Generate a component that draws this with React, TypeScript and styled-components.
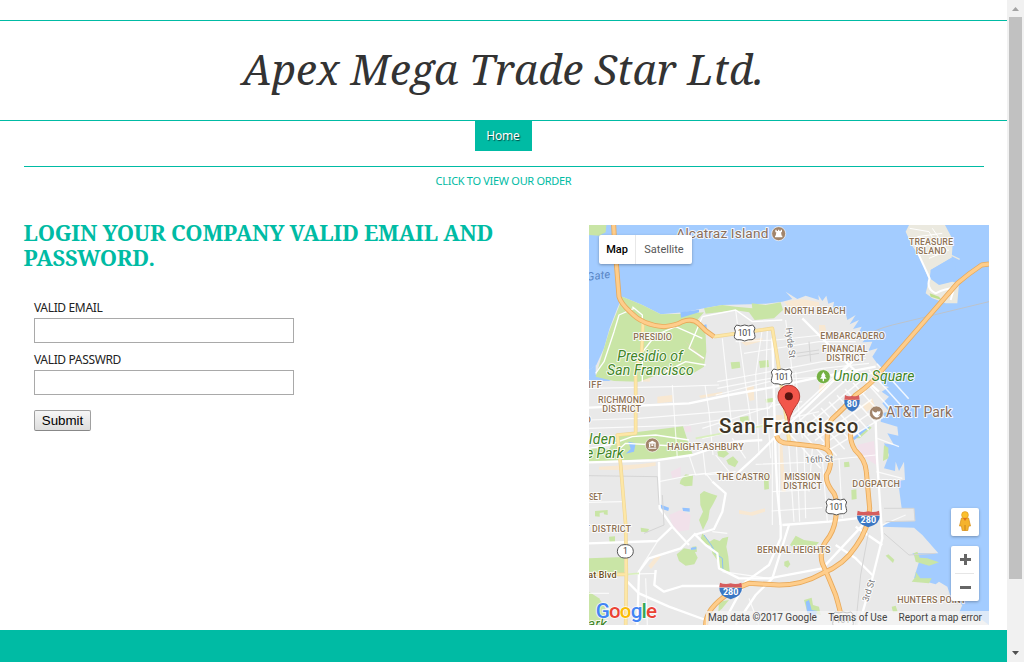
import React from "react";
import styled, { createGlobalStyle } from "styled-components";

const TEAL = "#00bba4";

const GlobalStyle = createGlobalStyle`
  * { box-sizing: border-box; }
  body { margin: 0; background: #fff; overflow: hidden; }
`;

const Window = styled.div`
  display: flex;
  width: 1024px;
  height: 662px;
  overflow: hidden;
  font-family: "Noto Sans", "Open Sans", sans-serif;
`;

const Page = styled.div`
  width: 1007px;
  height: 662px;
  padding-top: 20px;
  display: flex;
  flex-direction: column;
`;

const Header = styled.header`
  height: 101px;
  flex: none;
  border-top: 1px solid ${TEAL};
  border-bottom: 1px solid ${TEAL};
  display: flex;
  align-items: center;
  justify-content: center;
`;

const Title = styled.h1`
  margin: 0 1px 4px 0;
  font: italic 400 42px/50px "Noto Serif", "DejaVu Serif Condensed", serif;
  color: #333;
  white-space: nowrap;
`;

const Nav = styled.nav`
  height: 46px;
  flex: none;
  margin: 0 23px 0 24px;
  padding-right: 2px;
  border-bottom: 1px solid ${TEAL};
  display: flex;
  justify-content: center;
  align-items: flex-start;
`;

const NavLink = styled.a`
  width: 57px;
  height: 30px;
  background: ${TEAL};
  color: #fff;
  font-size: 12px;
  line-height: 30px;
  letter-spacing: -0.2px;
  text-align: center;
  text-shadow: 1px 1px 1px rgba(0, 0, 0, 0.6);
`;

const OrderLink = styled.a`
  height: 58px;
  flex: none;
  padding-top: 6px;
  text-align: center;
  color: ${TEAL};
  font-size: 11px;
  line-height: 16px;
  letter-spacing: -0.3px;
`;

const Main = styled.main`
  flex: none;
  height: 405px;
  display: flex;
  justify-content: space-between;
  padding: 0 18px 0 24px;
`;

const LoginColumn = styled.section`
  width: 500px;
`;

const Heading = styled.h2`
  margin: -5px 0 28px -0.5px;
  font: 700 22px/25px "Noto Serif", "DejaVu Serif Condensed", serif;
  letter-spacing: -0.26px;
  color: ${TEAL};
`;

const Form = styled.form`
  padding-left: 10px;
  display: flex;
  flex-direction: column;
  align-items: flex-start;
`;

const Field = styled.label`
  display: flex;
  flex-direction: column;
  height: 52px;
  font-size: 12px;
  line-height: 20px;
  letter-spacing: -0.35px;
  color: #222;
`;

const Input = styled.input`
  width: 260px;
  height: 25px;
  border: 1px solid #a9a9a9;
  border-radius: 0;
  padding: 0;
  background: #fff;
  outline: none;
`;

const Submit = styled.button`
  margin-top: 8px;
  width: 57px;
  height: 21px;
  padding: 0;
  border: 1px solid #a0a0a0;
  border-bottom-color: #888;
  border-radius: 2px;
  background: linear-gradient(#f6f6f6, #dddddd);
  font: 13.33px/18px "Liberation Sans", Arial, sans-serif;
  color: #000;
`;

const Footer = styled.footer`
  flex: 1;
  background: ${TEAL};
`;

const ScrollTrack = styled.div`
  width: 17px;
  height: 662px;
  background: #f1f1f1;
  display: flex;
  flex-direction: column;
  align-items: center;
`;

const ScrollArrow = styled.svg`
  width: 17px;
  height: 17px;
  flex: none;
`;

const ScrollThumb = styled.div`
  width: 13px;
  height: 562px;
  background: #c1c1c1;
  margin-bottom: auto;
`;

const MapFrame = styled.section`
  position: relative;
  width: 400px;
  height: 400px;
  overflow: hidden;
  font-family: Roboto, sans-serif;
`;

const MapDrawing = styled.svg`
  display: block;
  width: 400px;
  height: 400px;
  font-family: Roboto, sans-serif;
`;

const MapTypes = styled.div`
  position: absolute;
  left: 10px;
  top: 10px;
  display: flex;
  height: 29px;
  border-radius: 2px;
  background: #fff;
  box-shadow: 0 1px 3px rgba(0, 0, 0, 0.3);
`;

const MapType = styled.div<{ $active?: boolean; $width: number }>`
  width: ${(p) => p.$width}px;
  text-align: center;
  font-size: 11px;
  line-height: 29px;
  color: ${(p) => (p.$active ? "#000" : "#565656")};
  font-weight: ${(p) => (p.$active ? 500 : 400)};
  & + & { border-left: 1px solid #e8e8e8; }
`;

const MapTools = styled.div`
  position: absolute;
  right: 10px;
  bottom: 24px;
  display: flex;
  flex-direction: column;
  gap: 10px;
`;

const Tool = styled.div`
  width: 28px;
  border-radius: 2px;
  background: #fff;
  box-shadow: 0 1px 3px rgba(0, 0, 0, 0.3);
  svg { display: block; }
`;

const Attribution = styled.div`
  position: absolute;
  right: 0;
  bottom: 0;
  height: 14px;
  width: 283px;
  padding: 0 7px 0 2px;
  display: flex;
  justify-content: space-between;
  background: rgba(245, 245, 245, 0.7);
  color: #444;
  font-size: 10px;
  line-height: 14px;
  white-space: nowrap;
`;

const PARKS = [
  "0,0 52,0 50,22 30,32 0,30",
  "100,215 160,240 215,268 285,266 345,262 325,285 350,330 352,380 345,425 300,452 230,440 150,470 75,468 20,455 36,400 60,320 88,250",
  "345,250 400,240 440,245 490,250 488,235 530,240 575,232 582,255 555,280 497,285 480,262 440,256 350,266",
  "92,628 282,604 300,660 312,690 230,700 0,710 0,670 60,672",
  "425,412 452,410 454,428 428,432", "510,408 538,405 540,426 513,429",
  "452,577 478,573 480,590 455,593", "530,522 555,518 556,530 531,533",
  "385,680 405,672 420,686 404,698 388,694", "412,706 432,694 448,710 438,727 418,718",
  "275,765 290,748 312,752 310,782 288,784 272,776",
  "333,808 345,798 362,805 385,812 372,838 362,855 358,882 342,915 330,885 342,860 334,840",
  "340,925 362,950 375,942 392,948 400,940 418,935 412,965 418,995 422,1040 392,1035 388,1010 370,985 365,962 348,960 334,945",
  "263,988 285,970 315,975 326,998 316,1018 290,1022 270,1008",
  "310,965 322,964 324,980 310,982", "0,1000 105,996 106,1045 0,1040",
  "0,1100 30,1120 50,1150 45,1200 0,1200",
  "155,908 180,912 176,922 156,920", "60,935 78,934 78,952 62,952",
  "18,858 56,855 56,870 45,868 44,862 32,864 32,875 18,874",
  "765,712 780,710 782,725 766,727", "787,795 802,793 803,822 788,824", "524,752 538,750 540,792 526,794",
  "603,960 620,932 645,945 690,952 680,962 610,965", "586,1010 598,1006 604,1018 596,1028 586,1022",
  "890,992 898,988 916,1004 912,1014", "980,1010 974,985 985,980 992,998 1015,1000 1050,1012 1020,1022 1000,1016",
  "968,1070 980,1055 980,1040 994,1060 1028,1060 1020,1075 985,1072",
  "645,1125 668,1118 672,1140 690,1145 695,1170 655,1162", "390,1130 420,1125 400,1150 388,1160",
  "885,660 898,668 898,700 882,708", "908,1145 920,1142 926,1160 912,1162", "800,640 840,602 848,608 812,640",
];

const SAND = [
  "585,230 640,222 690,232 690,245 600,248", "450,855 485,862 528,850 528,860 490,872 450,866",
  "30,725 150,718 200,712 200,722 110,735 30,734", "330,512 400,500 400,508 335,520",
  "470,488 494,482 496,525 482,528", "690,300 708,300 716,340 690,338", "570,660 580,660 590,800 578,800",
  "820,540 850,520 858,545 832,560", "456,350 520,338 520,348 470,362", "140,455 185,460 182,470 140,468",
  "690,480 715,470 705,500 690,505", "560,570 580,570 582,592 562,594", "205,515 250,510 250,530 205,535",
  "178,1022 205,988 215,995 186,1032", "595,590 610,640 598,650 590,620",
];

const MAJOR_STREETS = [
  "0,712 200,706 310,690 370,670 440,650 520,645", "0,548 150,542 300,535 420,510 560,485 700,455 860,425",
  "445,745 500,695 560,635 690,510 800,400", "550,340 560,700 565,800 575,900 575,940 540,1020 470,1070 400,1200",
  "370,770 410,805 400,860 375,912 315,930 275,970 180,1000 150,1040 145,1200",
  "210,710 212,850 250,905 300,960", "115,1070 150,1105 240,1145 350,1185",
  "860,590 864,700 874,850 880,940 850,1060 810,1200", "580,900 720,890 800,880 850,880",
  "315,925 350,960 385,985 390,1030 450,1060 540,1060 700,1030 840,880",
  "640,280 700,340 780,420 870,500", "200,1035 196,1080 225,1100 280,1083 390,1083",
  "0,955 205,948 250,905", "440,1200 500,1110 550,1060 600,900",
  "740,960 800,1000 850,1050", "800,905 880,960",
];

const PARK_PATHS = [
  "135,250 90,270 75,320 45,410 20,445", "130,245 160,270 160,470", "150,395 200,330 260,305 340,340",
  "230,440 290,410 350,420", "340,275 300,370 345,400", "0,670 60,660 130,635 200,630 300,645",
  "60,700 110,655 200,660 300,665", "340,275 440,255 490,290 580,285",
];

const RESIDENTIAL = [
  "0,490 250,485 390,480", "0,585 150,580 400,560 540,550 560,520", "0,610 300,600 420,580",
  "250,480 258,600 265,700", "348,480 360,560 372,690", "400,340 430,620", "440,255 452,350 470,480 490,620",
  "520,310 500,450 510,690", "535,310 530,480 545,700", "590,285 605,400 620,540", "620,440 630,560 640,640",
  "440,350 560,345 700,330", "465,385 690,350 800,350", "385,470 700,410 830,400", "385,490 700,430 840,415",
  "380,510 560,465 860,445", "340,610 560,540 640,530", "340,640 560,590 690,560",
  "340,660 350,750 440,740", "300,690 320,750 400,740", "300,750 350,745 370,770", "380,690 420,740",
  "430,640 470,700", "500,718 650,712 860,690", "550,640 550,900", "570,640 572,900", "598,640 615,890",
  "622,650 632,890", "645,660 650,880", "670,670 660,800", "548,858 700,848", "550,800 660,795",
  "370,920 415,925", "0,832 100,830", "210,770 310,750", "205,950 145,1045", "100,1048 200,1045 200,1035",
  "0,1105 60,1105", "170,1060 175,1200", "480,1120 510,1200", "700,700 715,890", "750,700 760,880",
  "540,1060 400,1040", "880,900 950,870", "865,640 930,665", "862,740 940,760",
];

const DOWNTOWN_A = Array.from({ length: 12 }, (_, i) => `M${600 + i * 24},${625 - i * 19} l95,105`);
const DOWNTOWN_B = Array.from({ length: 7 }, (_, i) => `M${590 + i * 22},${590 + i * 14} L${780 + i * 17},${415 + i * 27}`);

const FREEWAYS = [
  "M74,0 L76,40 L84,140 L90,215 Q95,235 125,262 Q160,300 225,305 Q260,302 280,290 Q310,278 330,297 Q350,320 375,335",
  "M1200,117 L1178,120 Q1140,145 1105,175 L875,440 Q850,475 800,510 Q770,545 728,583 Q710,610 716,670",
  "M563,632 Q568,655 600,655 L690,665 Q720,670 724,690 Q728,730 712,750 Q710,775 735,805 Q748,830 740,880 Q735,920 710,950 Q690,980 700,1015 Q720,1060 740,1110 Q755,1160 762,1200",
  "M785,620 Q782,650 798,675 Q830,705 832,740 L842,850 Q840,910 800,965 Q765,1020 700,1045 Q640,1080 570,1080 L480,1075 Q440,1090 420,1105 Q350,1150 350,1200",
];

const YELLOW_ROADS = [
  "M375,335 L550,310 L565,400 L580,500 L595,600 L600,650", "M162,298 L158,380 L140,440 L140,625 L85,630 L95,720 L110,900 L112,1048 L110,1200",
  "M0,1048 L112,1048",
];

type LabelProps = { x: number; y: number; w: number; size?: number; children: string; tone?: "area" | "park" | "city" | "poi" | "street" | "water" | "road"; rotate?: number };

const TONES = {
  area: { fill: "#8f7355", weight: 500, italic: false },
  park: { fill: "#3f8526", weight: 400, italic: true },
  city: { fill: "#3f3627", weight: 500, italic: false },
  poi: { fill: "#8b6e5b", weight: 400, italic: false },
  street: { fill: "#777", weight: 400, italic: false },
  water: { fill: "#5784c4", weight: 400, italic: true },
  road: { fill: "#6b4f24", weight: 500, italic: false },
};

function Label({ x, y, w, size = 27, children, tone = "area", rotate = 0 }: LabelProps) {
  const t = TONES[tone];
  return (
    <text
      x={x} y={y} textLength={w} lengthAdjust="spacing"
      fontSize={size} fontWeight={t.weight} fontStyle={t.italic ? "italic" : "normal"}
      fill={t.fill} stroke={tone === "water" ? "none" : "#fff"} strokeWidth={tone === "city" ? 9 : 6} strokeOpacity={0.85}
      strokeLinejoin="round" paintOrder="stroke" transform={rotate ? `rotate(${rotate} ${x} ${y})` : undefined}
    >
      {children}
    </text>
  );
}

function UsShield({ x, y }: { x: number; y: number }) {
  return (
    <g transform={`translate(${x} ${y})`}>
      <path d="M-24,-23 Q-12,-17 0,-23 Q12,-17 24,-23 L31,-14 Q25,-4 30,6 Q34,18 22,21 Q10,20 0,25 Q-10,20 -22,21 Q-34,18 -30,6 Q-25,-4 -31,-14 Z" fill="#fff" stroke="#555" strokeWidth="3" />
      <text x="-21" y="10" textLength="42" fontSize="26" fill="#444">101</text>
    </g>
  );
}

function Interstate({ x, y, label, w }: { x: number; y: number; label: string; w: number }) {
  return (
    <g transform={`translate(${x} ${y})`}>
      <path d={`M${-w},-8 Q${-w - 2},16 0,27 Q${w + 2},16 ${w},-8 Z`} fill="#3a77c4" />
      <path d={`M${-w},-9 L${-w + 2},-23 Q${-w / 2},-16 0,-21 Q${w / 2},-16 ${w - 2},-23 L${w},-9 Z`} fill="#d65d5d" />
      <text x="0" y="14" textAnchor="middle" fontSize="27" fontWeight="700" fill="#fff">{label}</text>
    </g>
  );
}

const lines = (list: string[]) => list.map((p) => <polyline key={p} points={p} />);

function CityMap() {
  return (
    <MapDrawing viewBox="0 0 1200 1200">
      <rect width="1200" height="1200" fill="#a3ccff" />
      <path
        d="M100,215 L160,240 L215,268 L285,262 L345,250 L400,240 L480,238 L530,236 L580,230 L610,222 L590,200 L625,222 L650,212 L690,225 L688,210 L700,228 L712,212 L718,236 L735,230 L732,250 L770,265 L775,285 L800,270 L782,298 L810,285 L792,312 L818,305 L805,332 L845,325 L820,352 L850,350 L838,378 L866,370 L850,395 L875,430 L878,480 L900,486 L878,500 L900,515 L880,535 L900,560 L878,565 L875,590 L925,605 L928,632 L895,625 L915,660 L885,655 L900,690 L885,730 L918,738 L920,710 L930,738 L945,710 L948,765 L905,770 L930,790 L938,850 L975,850 L978,888 L900,890 L880,905 L975,908 L1000,930 L1048,985 L970,985 L990,1010 L975,1060 L1040,1078 L1050,1070 L1075,1085 L1085,1115 L1120,1140 L1110,1165 L1160,1170 L1200,1200 L0,1200 L0,435 L22,420 L45,370 L62,310 L85,250 Z"
        fill="#e9e9e9"
      />
      <path d="M0,435 L20,420 L20,450 L75,460 L60,468 L0,468 Z" fill="#a3ccff" />
      <path d="M960,0 L1068,0 L1092,45 L1088,98 L1025,135 L1022,160 L1050,180 L1090,170 L1110,175 L1105,235 L1070,235 L1030,220 L1010,205 L1020,165 L995,100 L968,60 L950,20 Z" fill="#ebe9df" />
      <path d="M1025,135 L1088,98 L1100,130 L1092,168 L1052,178 L1030,160 Z" fill="#a3ccff" />
      <path d="M1085,90 L1112,103" stroke="#ebe9df" strokeWidth="4" />
      <g fill="#f8e8d2">{SAND.map((p) => <polygon key={p} points={p} />)}</g>
      <g fill="#c9e5a6">{PARKS.map((p) => <polygon key={p} points={p} />)}</g>
      <g fill="#e2d7bd" opacity=".7"><polygon points="285,345 345,400 340,408" /><polygon points="180,440 230,425 290,425 210,445" /></g>
      <g fill="#f1e1ea">
        <polygon points="240,870 275,855 305,870 300,915 265,920 248,895" /><polygon points="803,660 855,648 862,720 815,690" />
        <polygon points="245,740 275,725 275,755 250,760" /><polygon points="285,605 305,602 308,620 290,622" />
      </g>
      <g fill="#93c2ff">
        <polygon points="212,838 240,848 238,858 218,852" /><polygon points="280,848 302,850 302,860 282,858" />
        <polygon points="118,650 140,655 135,680 110,686 125,672" /><polygon points="650,1130 660,1125 668,1155 685,1158 680,1172 655,1165" />
        <polygon points="274,262 330,254 330,262 276,278" /><polygon points="345,300 352,298 354,315 347,315" />
        <polygon points="790,640 838,600 842,606 796,645" /><polygon points="305,968 322,966 322,973 306,975" />
      </g>
      <polyline points="345,930 370,965 378,985 400,1000 402,1040" fill="none" stroke="#8fc1f2" strokeWidth="3" />
      <g fill="none" stroke="#fff" strokeLinejoin="round">
        <g strokeWidth="3.5" strokeOpacity=".8">{lines(RESIDENTIAL)}</g>
        <g strokeWidth="4.5" strokeOpacity=".85">{[...DOWNTOWN_A, ...DOWNTOWN_B].map((d) => <path key={d} d={d} />)}</g>
        <g strokeWidth="4">{lines(PARK_PATHS)}</g>
        <g strokeWidth="7">{lines(MAJOR_STREETS)}</g>
        <path d="M962,10 L1020,20 L1060,90 M985,35 L1060,25 M1000,60 L1080,50 M1020,100 L1080,75 M1030,10 L1075,75" strokeWidth="3" />
        <path d="M985,80 L1022,160 Q1010,190 1040,205 Q1070,190 1095,190 L1085,225" strokeWidth="6" />
      </g>
      <g fill="none" stroke="#d5d5d5" strokeWidth="3">
        <path d="M0,752 L205,755 L210,840 M838,925 L815,1050 L800,1200 M885,925 L960,990 L1040,985 M885,850 L975,850 L978,888 L890,890" />
        <path d="M620,385 L690,375 M625,395 L690,385 M660,350 L665,410 M220,810 L225,900 L165,925" />
      </g>
      <path d="M810,345 Q850,315 910,300 L1200,230" fill="none" stroke="#bcc3cc" strokeWidth="3" />
      <path d="M1022,205 L1050,215 L1058,225 L1025,215 Z" fill="#bfe08e" />
      <path d="M320,640 L545,598 M150,1045 L112,1048" stroke="#d9efbe" strokeWidth="5" />
      <g fill="none" strokeLinejoin="round">
        {YELLOW_ROADS.map((d) => <path key={d} d={d} stroke="#f0d695" strokeWidth="11" />)}
        {YELLOW_ROADS.map((d) => <path key={d + "in"} d={d} stroke="#fde7a6" strokeWidth="7" />)}
        {FREEWAYS.map((d) => <path key={d} d={d} stroke="#e9aa5b" strokeWidth="15" />)}
        {FREEWAYS.map((d) => <path key={d + "in"} d={d} stroke="#fecd8b" strokeWidth="10" />)}
      </g>

      <Label x={262} y={40} w={276} size={41} tone="poi">Alcatraz Island</Label>
      <Label x={-5} y={167} w={70} size={34} tone="water" rotate={-7}>Gate</Label>
      <Label x={960} y={60} w={132}>TREASURE</Label>
      <Label x={980} y={87} w={92}>ISLAND</Label>
      <Label x={586} y={267} w={184}>NORTH BEACH</Label>
      <Label x={694} y={342} w={194}>EMBARCADERO</Label>
      <Label x={699} y={381} w={137}>FINANCIAL</Label>
      <Label x={712} y={408} w={116}>DISTRICT</Label>
      <Label x={133} y={345} w={116}>PRESIDIO</Label>
      <Label x={85} y={408} w={196} size={42} tone="park">Presidio of</Label>
      <Label x={54} y={450} w={260} size={42} tone="park">San Francisco</Label>
      <Label x={-2} y={489} w={40}>IFF</Label>
      <Label x={-12} y={594} w={18}>D</Label>
      <Label x={27} y={534} w={141}>RICHMOND</Label>
      <Label x={40} y={561} w={116}>DISTRICT</Label>
      <Label x={0} y={656} w={80} size={42} tone="park">lden</Label>
      <Label x={-9} y={698} w={113} size={42} tone="park">e Park</Label>
      <Label x={235} y={675} w={229}>HAIGHT-ASHBURY</Label>
      <Label x={383} y={765} w={160}>THE CASTRO</Label>
      <Label x={586} y={765} w={108}>MISSION</Label>
      <Label x={583} y={792} w={116}>DISTRICT</Label>
      <Label x={790} y={786} w={143}>DOGPATCH</Label>
      <Label x={649} y={714} w={84} tone="street" rotate={-3}>16th St</Label>
      <Label x={590} y={309} w={92} tone="street" rotate={83}>Hyde St</Label>
      <Label x={837} y={1132} w={68} tone="street" rotate={-72}>3rd St</Label>
      <Label x={0} y={825} w={40} size={25}>SET</Label>
      <Label x={-14} y={920} w={140}>T DISTRICT</Label>
      <Label x={504} y={984} w={220}>BERNAL HEIGHTS</Label>
      <Label x={-2} y={1060} w={85} tone="road">at Blvd</Label>
      <Label x={925} y={1134} w={206}>HUNTERS POINT</Label>
      <Label x={-4} y={1211} w={58} size={42} tone="park">ark</Label>
      <Label x={733} y={468} w={243} size={42} tone="park">Union Square</Label>
      <Label x={891} y={576} w={198} size={42} tone="poi">AT&amp;T Park</Label>

      <g stroke="#fff" strokeWidth="2">
        <circle cx="569" cy="26" r="21" fill="#a1846b" />
        <circle cx="190" cy="660" r="21" fill="#a1846b" />
        <circle cx="862" cy="564" r="21" fill="#a1846b" />
        <circle cx="703" cy="455" r="21" fill="#74b043" />
      </g>
      <g fill="#fff">
        <path d="M559,14 h4 v4 h4 v-4 h4 v4 h4 v-4 h4 v8 h-3 l2,10 h2 v5 h-22 v-5 h2 l2,-10 h-3 Z" />
        <path d="M179,653 l11,-6 l11,6 v3 h-22 Z M180,657 h4 v10 h-4 Z M196,657 h4 v10 h-4 Z M178,668 h24 v3 h-24 Z M187,658 h6 v5 h-6 Z" />
        <path d="M850,556 q10,12 16,2 q6,4 8,-2 q2,14 -8,15 q8,2 9,-3 q-3,11 -15,9 q-12,-6 -10,-21 Z" />
        <path d="M703,441 l7,11 h-3 l6,9 h-8 v8 h-4 v-8 h-8 l6,-9 h-3 Z" />
      </g>
      <UsShield x={467} y={323} />
      <UsShield x={578} y={455} />
      <UsShield x={742} y={845} />
      <UsShield x={762} y={1184} />
      <Interstate x={789} y={533} label="80" w={23} />
      <Interstate x={838} y={880} label="280" w={34} />
      <Interstate x={425} y={1096} label="280" w={34} />
      <rect x="85" y="959" width="48" height="40" rx="20" fill="#fff" stroke="#555" strokeWidth="3" />
      <text x="109" y="988" textAnchor="middle" fontSize="26" fill="#444">1</text>

      <Label x={390} y={624} w={418} size={61} tone="city">San Francisco</Label>
      <path d="M599,597 Q598,575 587,556 C575,535 567,531 567,513 A32.5,32.5 0 1 1 632,513 C632,531 624,535 612,556 Q601,575 599,597 Z" fill="#f2564b" stroke="#b43a31" strokeWidth="3" />
      <circle cx="599.5" cy="514" r="12" fill="#591410" />
      <text x="20" y="1179" textLength="184" lengthAdjust="spacing" fontSize="62" fontWeight="500" stroke="#fff" strokeWidth="5" strokeOpacity=".8" paintOrder="stroke">
        <tspan fill="#4285f4">G</tspan><tspan fill="#ea4335">o</tspan><tspan fill="#fbbc05">o</tspan><tspan fill="#4285f4">g</tspan><tspan fill="#34a853">l</tspan><tspan fill="#ea4335">e</tspan>
      </text>
    </MapDrawing>
  );
}

export default function App() {
  return (
    <Window>
      <GlobalStyle />
      <Page>
        <Header><Title>Apex Mega Trade Star Ltd.</Title></Header>
        <Nav><NavLink>Home</NavLink></Nav>
        <OrderLink>CLICK TO VIEW OUR ORDER</OrderLink>
        <Main>
          <LoginColumn>
            <Heading>LOGIN YOUR COMPANY VALID EMAIL AND PASSWORD.</Heading>
            <Form>
              <Field>VALID EMAIL<Input type="text" /></Field>
              <Field>VALID PASSWRD<Input type="password" /></Field>
              <Submit type="button">Submit</Submit>
            </Form>
          </LoginColumn>
          <MapFrame>
            <CityMap />
            <MapTypes>
              <MapType $active $width={36}>Map</MapType>
              <MapType $width={57}>Satellite</MapType>
            </MapTypes>
            <MapTools>
              <Tool>
                <svg width="28" height="28" viewBox="0 0 28 28">
                  <path d="M10.5,10 L17.5,10 L19.5,18 L17.5,18 L16.8,22.5 L11.2,22.5 L10.5,18 L8.5,18 Z" fill="#f5b32c" stroke="#d99320" strokeWidth=".8" />
                  <circle cx="14" cy="7" r="3.4" fill="#fbc02d" stroke="#d99320" strokeWidth=".6" />
                  <path d="M12,10 L16,10 L14,13 Z" fill="#e2711d" />
                  <path d="M14,17 V22.5" stroke="#c98218" />
                </svg>
              </Tool>
              <Tool>
                <svg width="28" height="55" viewBox="0 0 28 55">
                  <path d="M9,13.5 H20 M14.5,8 V19 M9,41.5 H20" stroke="#666" strokeWidth="3" />
                  <path d="M4,27.5 H23" stroke="#e6e6e6" />
                </svg>
              </Tool>
            </MapTools>
            <Attribution>
              <span>Map data ©2017 Google</span><span>Terms of Use</span><span>Report a map error</span>
            </Attribution>
          </MapFrame>
        </Main>
        <Footer />
      </Page>
      <ScrollTrack>
        <ScrollArrow viewBox="0 0 17 17"><path d="M5,11 L8.5,7 L12,11 Z" fill="#a3a3a3" /></ScrollArrow>
        <ScrollThumb />
        <ScrollArrow viewBox="0 0 17 17"><path d="M5,6 L8.5,10 L12,6 Z" fill="#505050" /></ScrollArrow>
      </ScrollTrack>
    </Window>
  );
}
